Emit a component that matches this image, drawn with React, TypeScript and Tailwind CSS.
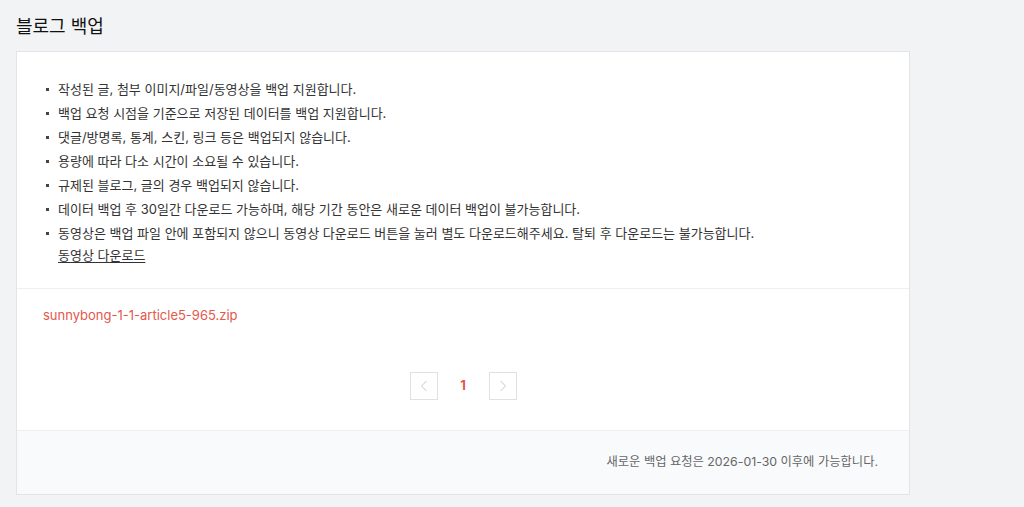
import React from "react";

const NOTES: string[] = [
  "작성된 글, 첨부 이미지/파일/동영상을 백업 지원합니다.",
  "백업 요청 시점을 기준으로 저장된 데이터를 백업 지원합니다.",
  "댓글/방명록, 통계, 스킨, 링크 등은 백업되지 않습니다.",
  "용량에 따라 다소 시간이 소요될 수 있습니다.",
  "규제된 블로그, 글의 경우 백업되지 않습니다.",
  "데이터 백업 후 30일간 다운로드 가능하며, 해당 기간 동안은 새로운 데이터 백업이 불가능합니다.",
];

function Chevron({ dir }: { dir: "left" | "right" }) {
  return (
    <svg width="8" height="12" viewBox="0 0 8 12" fill="none">
      <path
        d={dir === "left" ? "M6.5 1 L1.5 6 L6.5 11" : "M1.5 1 L6.5 6 L1.5 11"}
        stroke="#c8c8c8"
        strokeWidth="1"
      />
    </svg>
  );
}

function Bullet() {
  return (
    <span className="w-[13px] shrink-0 flex items-start pt-[10px] pl-[1px]">
      <span className="w-[3px] h-[3px] bg-[#444]" />
    </span>
  );
}

export default function App() {
  return (
    <div
      className="min-h-[507px] bg-[#f2f3f5] px-4 pt-[13px] text-[#333]"
      style={{ fontFamily: 'Inter, "Noto Sans CJK KR", sans-serif' }}
    >
      <h1 className="text-[18px] leading-[28px] text-[#111] mb-[10px]">블로그 백업</h1>

      <div className="w-[894px] bg-white border border-[#e3e4e8]">
        {/* notice list */}
        <div className="pl-7 pt-[26px] pb-[22px] border-b border-[#eeeff2]">
          <ul className="flex flex-col gap-[2px] text-[13px] leading-[22px]">
            {NOTES.map((note) => (
              <li key={note} className="flex">
                <Bullet />
                <span>{note}</span>
              </li>
            ))}
            <li className="flex">
              <Bullet />
              <span>
                동영상은 백업 파일 안에 포함되지 않으니 동영상 다운로드 버튼을 눌러 별도 다운로드해주세요. 탈퇴 후 다운로드는 불가능합니다.
                <br />
                <a className="underline underline-offset-2 text-[#333]">동영상 다운로드</a>
              </span>
            </li>
          </ul>
        </div>

        {/* backup file */}
        <div className="pl-[26px] pt-4 pb-[30px] border-b border-[#eeeff2]">
          <p className="text-[13px] leading-5 text-[#e4574b]">sunnybong-1-1-article5-965.zip</p>
          <div className="mt-[47px] -ml-[26px] flex items-center justify-center gap-3">
            <button className="w-7 h-7 border border-[#e1e1e1] flex items-center justify-center">
              <Chevron dir="left" />
            </button>
            <span className="w-[27px] text-center text-[13px] font-bold text-[#e8544a]">1</span>
            <button className="w-7 h-7 border border-[#e1e1e1] flex items-center justify-center">
              <Chevron dir="right" />
            </button>
          </div>
        </div>

        {/* footer */}
        <div className="bg-[#f9fafc] h-[63px] flex items-center justify-end pr-[31px]">
          <p className="text-[12.3px] text-[#666]">새로운 백업 요청은 2026-01-30 이후에 가능합니다.</p>
        </div>
      </div>
    </div>
  );
}
